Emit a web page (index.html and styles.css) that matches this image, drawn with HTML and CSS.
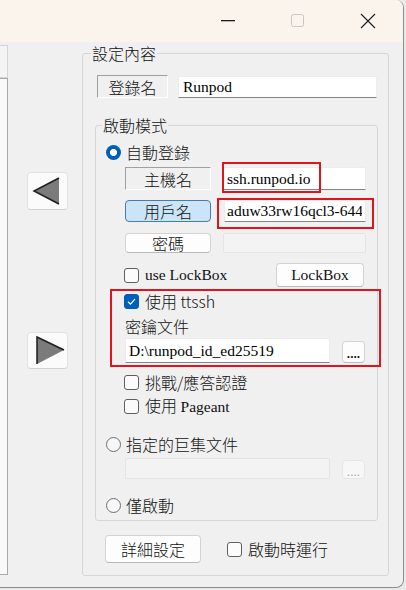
FILE: index.html
```html
<!DOCTYPE html>
<html lang="zh-Hant">
<head>
<meta charset="utf-8">
<title>設定內容</title>
<link rel="stylesheet" href="styles.css">
</head>
<body>
<div class="window">
  <div class="titlebar">
    <div class="tb-btn"><svg class="tb-icon" width="16" height="16" viewBox="0 0 16 16"><rect x="1" y="7" width="14" height="1.3" fill="#1b1b1b"/></svg></div>
    <div class="tb-btn"><svg class="tb-icon" width="16" height="16" viewBox="0 0 16 16"><rect x="1.5" y="1.5" width="12" height="12" rx="2" fill="none" stroke="#c6c6c6" stroke-width="1"/></svg></div>
    <div class="tb-btn"><svg class="tb-icon" width="16" height="16" viewBox="0 0 16 16"><path d="M1 1L15 15M15 1L1 15" stroke="#1b1b1b" stroke-width="1.1"/></svg></div>
  </div>
  <div class="client">
    <div class="stubs">
      <div class="stub stub-top"></div>
      <div class="stub stub-list"></div>
    </div>
    <div class="arrows">
      <button class="arrow-btn arrow-left" type="button">
        <svg width="39" height="36" viewBox="0 0 39 36"><polygon points="6,18 31,5 31,31" fill="#7b7b7b"/><polyline points="31,31 6,18 31,5" fill="none" stroke="#1e1e1e" stroke-width="1.5"/></svg>
      </button>
      <button class="arrow-btn arrow-right" type="button">
        <svg width="39" height="35" viewBox="0 0 39 35"><polygon points="9,4 36,17 9,31" fill="#7b7b7b"/><polyline points="9,31 9,4 36,17" fill="none" stroke="#1e1e1e" stroke-width="1.5"/></svg>
      </button>
    </div>
    <fieldset class="group group-outer">
      <legend>設定內容</legend>
      <div class="row name-row">
        <span class="static-box name-box">登錄名</span>
        <input class="text-field name-field" type="text" value="Runpod" readonly>
      </div>
      <fieldset class="group group-inner">
        <legend>啟動模式</legend>
        <div class="radio-row auto-row"><span class="radio checked"></span><span>自動登錄</span></div>
        <div class="row field-row host-row">
          <span class="static-box">主機名</span>
          <div class="field-wrap">
            <input class="text-field host-field" type="text" value="ssh.runpod.io" readonly>
            <span class="mark mark-host"></span>
          </div>
        </div>
        <div class="row field-row user-row">
          <button class="btn btn-active" type="button">用戶名</button>
          <div class="field-wrap">
            <input class="text-field user-field" type="text" value="aduw33rw16qcl3-644" readonly>
            <span class="mark mark-user"></span>
          </div>
        </div>
        <div class="row field-row pass-row">
          <button class="btn" type="button">密碼</button>
          <div class="text-field disabled-field pass-field"></div>
        </div>
        <div class="row lockbox-row">
          <div class="check-row"><span class="check"></span><span class="lat">use LockBox</span></div>
          <button class="btn lat lockbox-btn" type="button">LockBox</button>
        </div>
        <div class="ttssh-box">
          <div class="check-row ttssh-row"><span class="check checked"><svg width="15" height="15" viewBox="0 0 15 15"><path d="M4 7.8L6.4 10.1L11 5" fill="none" stroke="#fff" stroke-width="1.2"/></svg></span><span>使用 ttssh</span></div>
          <div class="key-label">密鑰文件</div>
          <div class="row file-row">
            <input class="text-field key-field" type="text" value="D:\runpod_id_ed25519" readonly>
            <button class="btn dots-btn" type="button">....</button>
          </div>
        </div>
        <div class="check-row plain-check challenge-row"><span class="check"></span><span>挑戰/應答認證</span></div>
        <div class="check-row plain-check pageant-row"><span class="check"></span><span>使用 <span class="lat">Pageant</span></span></div>
        <div class="radio-row macro-row"><span class="radio"></span><span>指定的巨集文件</span></div>
        <div class="row macro-file-row">
          <div class="text-field disabled-field macro-field"></div>
          <button class="btn dots-btn dots-disabled" type="button">....</button>
        </div>
        <div class="radio-row start-row"><span class="radio"></span><span>僅啟動</span></div>
      </fieldset>
      <div class="row bottom-row">
        <button class="btn detail-btn" type="button">詳細設定</button>
        <div class="check-row run-row"><span class="check"></span><span>啟動時運行</span></div>
      </div>
    </fieldset>
  </div>
</div>
</body>
</html>
```
FILE: styles.css
```css
* { box-sizing: border-box; }
html, body { margin: 0; padding: 0; }
body {
  width: 406px;
  height: 590px;
  overflow: hidden;
  background: #e9e9e9;
  font-family: "Noto Sans CJK TC", "Noto Sans", sans-serif;
  font-weight: 300;
  font-size: 16px;
  color: #111;
}
.window {
  width: 404px;
  height: 588px;
  background: #f0f0f0;
  border-right: 1px solid #8e8e8e;
  border-bottom: 1px solid #8e8e8e;
  border-radius: 0 8px 8px 0;
  overflow: hidden;
}
.titlebar {
  height: 42px;
  background: #faf4ec;
  padding-left: 193px;
  display: grid;
  grid-template-columns: 70px 70px 70px;
}
.tb-btn {
  height: 42px;
  padding-top: 13px;
}
.tb-icon { display: block; margin: 0 auto; }
.client {
  display: flex;
  align-items: flex-start;
}
.stubs {
  width: 8px;
  display: flex;
  flex-direction: column;
}
.stub { border: 1px solid #d4d4d4; border-left: none; }
.stub-top { margin-top: 3px; height: 33px; background: #f4f4f4; }
.stub-list { height: 497px; border-color: #a9a9a9; background: #f9f9f9; }
.arrows {
  width: 74px;
  padding-left: 19px;
  display: flex;
  flex-direction: column;
}
.arrow-btn {
  width: 41px;
  padding: 0;
  margin: 0;
  background: #fbfbfb;
  border: 1px solid #e2e2e2;
  border-bottom-color: #d2d2d2;
  border-radius: 4px;
  display: flex;
  align-items: center;
  justify-content: center;
}
.arrow-btn svg { display: block; }
.arrow-left { margin-top: 130px; height: 38px; }
.arrow-right { margin-top: 122px; height: 37px; }

.group {
  margin: 0;
  padding: 0;
  min-width: 0;
  border: 1px solid #d6d6d6;
  border-radius: 3px;
}
.group > legend {
  padding: 0 1px;
  font-size: 16px;
  line-height: 18px;
}
.group-outer {
  margin-top: 2px;
  width: 307px;
  height: 532px;
}
.group-outer > legend { margin-left: 8px; }
.group-inner {
  margin: 18px 0 0 12px;
  width: 283px;
  height: 405px;
}
.group-inner > legend { margin-left: 6px; }

.row { display: flex; align-items: flex-start; }
.lat { font-family: "Liberation Serif", "Noto Sans CJK TC", serif; font-size: 15.5px; font-weight: 400; }

.static-box {
  display: flex;
  align-items: center;
  justify-content: center;
  background: #f0f0f0;
  border: 1px solid #ffffff;
  border-top-color: #a0a0a0;
  border-left-color: #a0a0a0;
  line-height: 20px;
}
.name-row { margin: 13px 0 0 14px; }
.name-box { width: 71px; height: 23px; }
.text-field {
  display: block;
  margin: 0;
  background: #ffffff;
  border: 1px solid #ececec;
  border-bottom-color: #848484;
  border-radius: 2px 2px 0 0;
  padding: 0 3px;
  font-family: "Liberation Serif", "Noto Sans CJK TC", serif;
  font-size: 15.5px;
  font-weight: 400;
  color: #000;
  outline: none;
}
.name-field { margin: 1px 0 0 10px; width: 199px; height: 22px; padding-left: 4px; }

.radio-row {
  display: flex;
  align-items: center;
  gap: 5px;
  height: 20px;
  padding-left: 10px;
  line-height: 20px;
}
.radio {
  width: 15px;
  height: 15px;
  border-radius: 50%;
  border: 1px solid #6e6e6e;
  background: #f7f7f7;
  flex: none;
}
.radio.checked {
  border: none;
  background: radial-gradient(circle, #ffffff 0 3.3px, #005fb8 3.8px);
}
.auto-row { margin-top: 8px; }

.field-row { margin-left: 29px; }
.field-row .static-box, .field-row .btn { width: 86px; }
.field-wrap { position: relative; margin-left: 12px; }
.host-row { margin-top: 5px; }
.host-row .static-box { height: 23px; }
.host-field { width: 143px; height: 23px; }
.user-row { margin-top: 10px; }
.user-row .btn { height: 22px; }
.user-field { width: 142px; height: 22px; padding-left: 2px; margin-left: 1px; }
.pass-row { margin-top: 11px; }
.pass-row .btn { height: 20px; }
.pass-field { margin-left: 12px; width: 143px; height: 20px; }

.mark {
  position: absolute;
  border: 2px solid #e0141c;
  pointer-events: none;
}
.mark-host { left: -1px; top: -5px; width: 99px; height: 31px; }
.mark-user { left: -6px; top: -2px; width: 157px; height: 31px; }

.btn {
  margin: 0;
  padding: 0;
  background: #fdfdfd;
  border: 1px solid #d3d3d3;
  border-bottom-color: #b9b9b9;
  border-radius: 4px;
  font-family: "Noto Sans CJK TC", sans-serif;
  font-weight: 300;
  font-size: 16px;
  line-height: 18px;
  color: #111;
}
.btn.lat { font-family: "Liberation Serif", serif; font-size: 15.5px; font-weight: 400; }
.btn-active {
  background: #cce4f7;
  border-color: #4a7aa6;
}
.disabled-field {
  background: #f3f3f3;
  border: 1px solid #e4e4e4;
}

.check-row {
  display: flex;
  align-items: center;
  gap: 6px;
  height: 20px;
  line-height: 20px;
  white-space: nowrap;
}
.check {
  width: 15px;
  height: 15px;
  border: 1px solid #5f5f5f;
  border-radius: 3px;
  background: #fbfbfb;
  flex: none;
  display: flex;
}
.check.checked { background: #005fb8; border-color: #005fb8; }
.check svg { display: block; margin: -1px; }

.lockbox-row {
  margin: 10px 0 0 28px;
  width: 240px;
  height: 24px;
  justify-content: space-between;
  align-items: center;
}
.lockbox-btn { width: 88px; height: 24px; }

.ttssh-box {
  margin: 2px 0 0 14px;
  width: 271px;
  border: 2px solid #e0141c;
  padding-bottom: 2px;
}
.ttssh-row { padding-left: 12px; }
.key-label { margin-top: 5px; height: 20px; line-height: 20px; padding-left: 13px; }
.file-row { margin: 2px 0 0 13px; align-items: flex-end; }
.key-field { width: 205px; height: 25px; }
.dots-btn {
  width: 23px;
  margin-left: 12px;
  font-family: "Liberation Sans", sans-serif;
  font-size: 12px;
  font-weight: bold;
  line-height: 12px;
  padding-top: 4px;
  letter-spacing: 0;
}
.file-row .dots-btn { height: 22px; }

.plain-check { margin-left: 28px; }
.challenge-row { margin-top: 5px; }
.pageant-row { margin-top: 4px; }
.macro-row { margin-top: 18px; }
.macro-file-row { margin: 4px 0 0 29px; align-items: flex-end; }
.macro-field { width: 205px; height: 21px; }
.dots-disabled { height: 19px; color: #a3a3a3; background: #f7f7f7; border-color: #e6e6e6; font-weight: normal; }
.start-row { margin-top: 16px; }

.bottom-row { margin: 14px 0 0 22px; align-items: center; }
.detail-btn { width: 96px; height: 28px; }
.run-row { margin-left: 26px; }
```
